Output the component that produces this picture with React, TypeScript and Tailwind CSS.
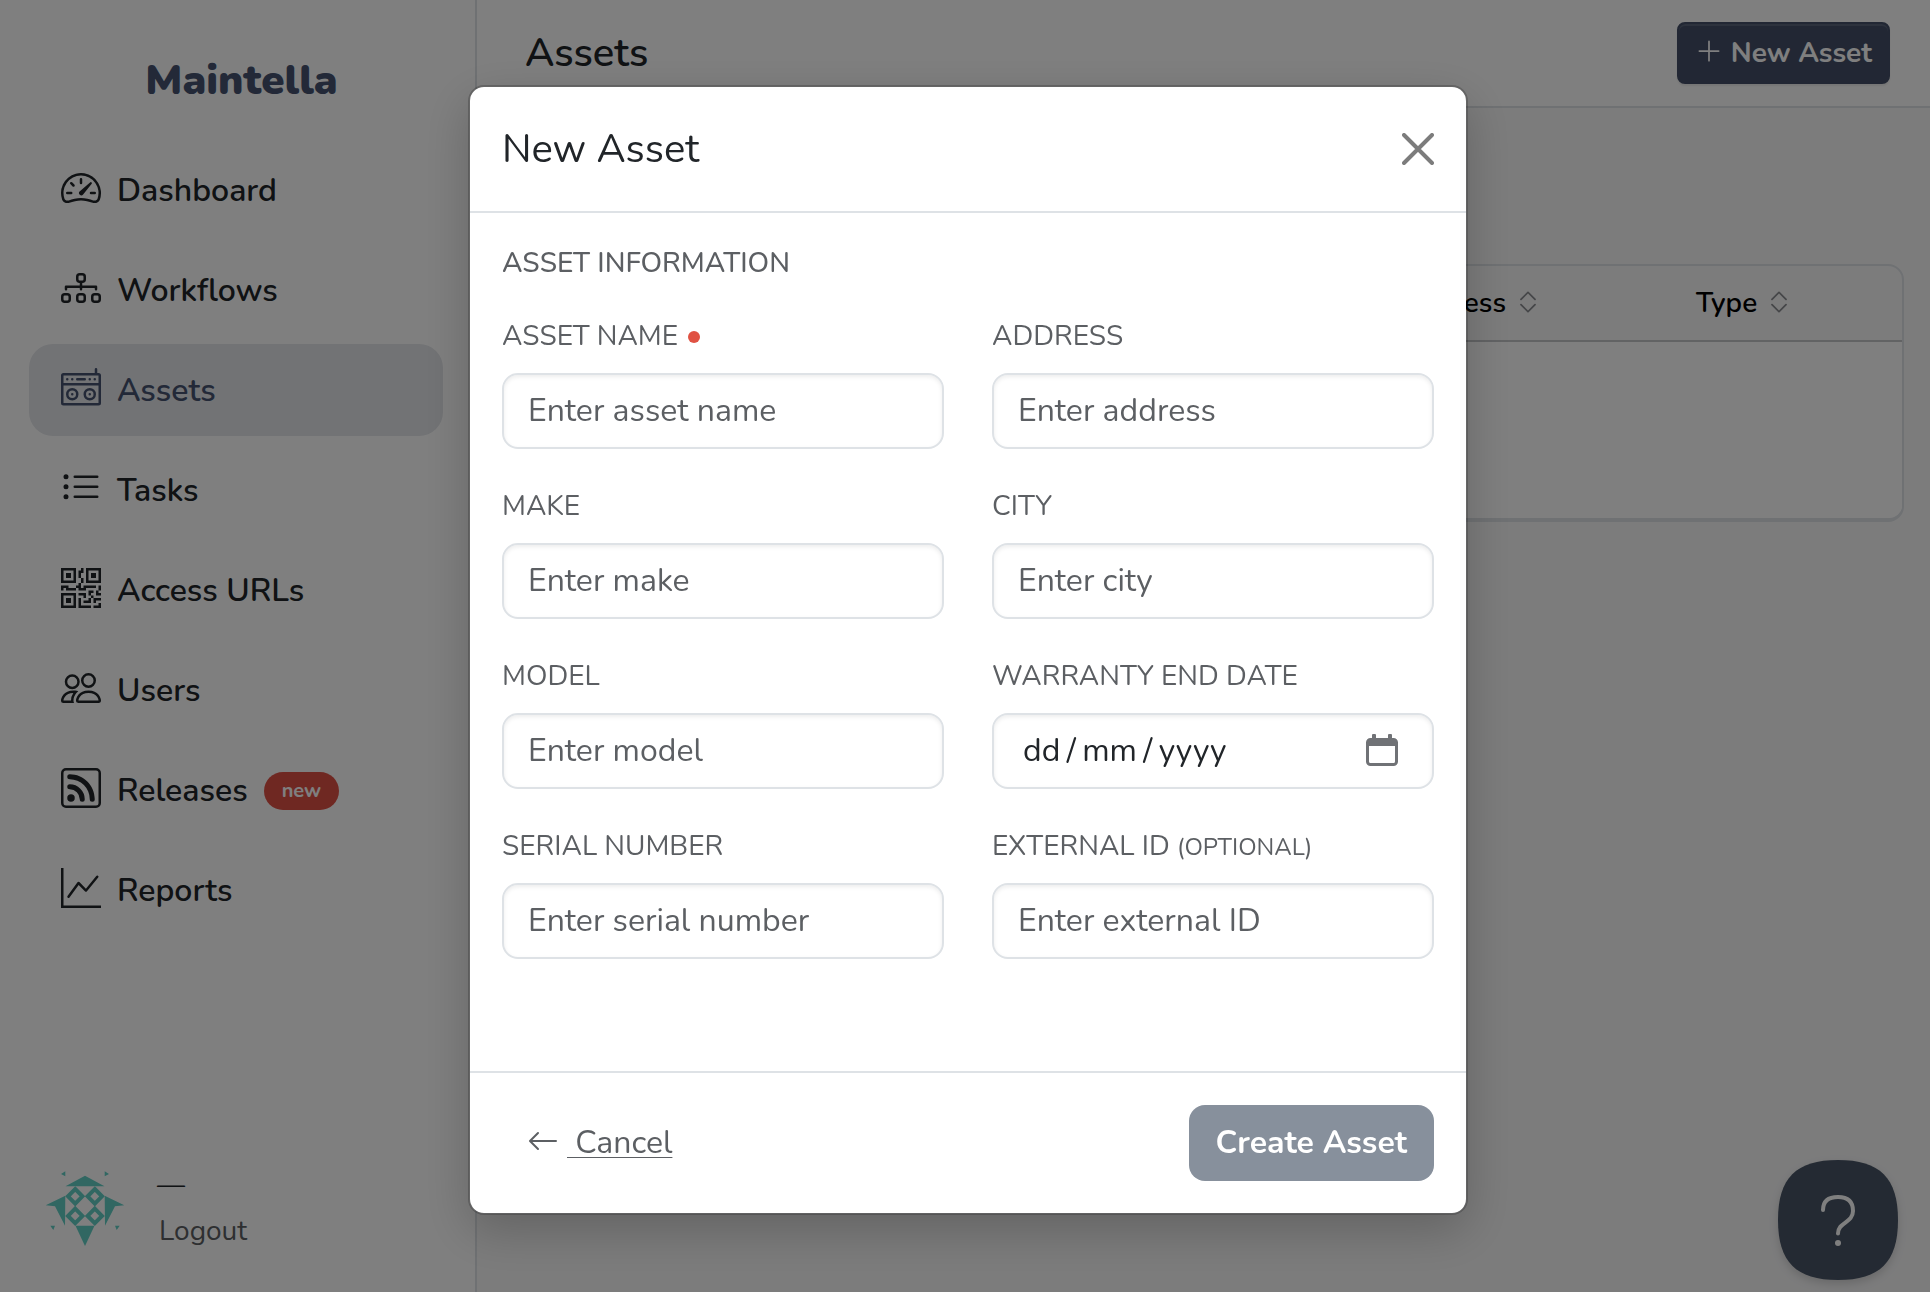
import { ReactNode, useState } from "react";
import {
  BsArrowLeft,
  BsBoombox,
  BsChevronExpand,
  BsDiagram3,
  BsGraphUp,
  BsListUl,
  BsPeople,
  BsPlusLg,
  BsQrCode,
  BsRss,
  BsSpeedometer2,
} from "react-icons/bs";

type NavItem = {
  label: string;
  icon: ReactNode;
  active?: boolean;
  badge?: string;
};

const navItems: NavItem[] = [
  { label: "Dashboard", icon: <BsSpeedometer2 /> },
  { label: "Workflows", icon: <BsDiagram3 /> },
  { label: "Assets", icon: <BsBoombox />, active: true },
  { label: "Tasks", icon: <BsListUl /> },
  { label: "Access URLs", icon: <BsQrCode /> },
  { label: "Users", icon: <BsPeople /> },
  { label: "Releases", icon: <BsRss />, badge: "new" },
  { label: "Reports", icon: <BsGraphUp /> },
];

type FieldProps = {
  id: string;
  label: string;
  placeholder: string;
  required?: boolean;
  optional?: boolean;
};

const fields: FieldProps[] = [
  { id: "name", label: "Asset name", placeholder: "Enter asset name", required: true },
  { id: "address", label: "Address", placeholder: "Enter address" },
  { id: "make", label: "Make", placeholder: "Enter make" },
  { id: "city", label: "City", placeholder: "Enter city" },
  { id: "model", label: "Model", placeholder: "Enter model" },
  // thin spaces round the slashes
  { id: "warranty", label: "Warranty end date", placeholder: "dd\u2009/\u2009mm\u2009/\u2009yyyy" },
  { id: "serial", label: "Serial number", placeholder: "Enter serial number" },
  { id: "external", label: "External ID", placeholder: "Enter external ID", optional: true },
];

function Avatar() {
  return (
    <svg viewBox="0 0 80 80" className="size-20" fill="#62cfc5" aria-hidden="true">
      <path d="M20.5 18.3 40 7.7l19.5 10.6z" />
      <path d="M30.5 57.7h19L40 78z" />
      <path d="M20.3 27.7.7 37.3l9.3 1 10 19.4z" />
      <path d="M59.7 27.7l19.6 9.6-9.3 1-10 19.4z" />
      <path d="M16 6l4.3-2.7v5zM64 6l-4.3-2.7v5zM5.3 57.7H10L8.3 62zM74.7 57.7H70l1.7 4.3z" />
      <g fill="none" stroke="#62cfc5" strokeWidth="4">
        <path d="M30.2 21l7.2 7.3-7.2 7.3-7.2-7.3z" />
        <path d="M49.8 21l7.2 7.3-7.2 7.3-7.2-7.3z" />
        <path d="M30.2 40.6l7.2 7.3-7.2 7.3-7.2-7.3z" />
        <path d="M49.8 40.6l7.2 7.3-7.2 7.3-7.2-7.3z" />
      </g>
    </svg>
  );
}

function Sidebar() {
  return (
    <aside className="flex w-[477px] shrink-0 flex-col border-r-2 border-[#dee2e6] bg-white">
      <div className="flex h-36 items-center justify-center pt-4 pl-2 text-[42px] font-black text-[#465370]">
        Maintella
      </div>
      <nav className="flex flex-col gap-2 pr-8 pl-[29px]">
        {navItems.map((item) => (
          <a
            key={item.label}
            href="#"
            className={`flex h-[92px] items-center gap-4 rounded-3xl px-8 pt-0.5 text-[32px] font-semibold ${
              item.active ? "bg-[#e4e6ea] text-[#465370]" : "text-[#212529]"
            }`}
          >
            <span className="pb-1.5 text-[40px]">{item.icon}</span>
            {item.label}
            {item.badge && (
              <span className="flex h-[38px] items-center rounded-full bg-[#df5045] px-[18px] text-xl font-bold text-white">
                {item.badge}
              </span>
            )}
          </a>
        ))}
      </nav>
      <div className="mt-auto flex items-center gap-8 pb-10 pl-[45px]">
        <Avatar />
        <div className="flex flex-col gap-1 text-[28px] leading-[42px]">
          <span className="text-[#212529]">—</span>
          <a href="#" className="pl-0.5 text-[#5c5f63]">
            Logout
          </a>
        </div>
      </div>
    </aside>
  );
}

function SortHeader({ label }: { label: string }) {
  return (
    <th className="h-[76px] border-b-2 border-[#c4c6c9] pl-6 text-left font-semibold text-black">
      <button className="flex items-center gap-2">
        {label}
        <BsChevronExpand className="mb-0.5 text-[28px] text-[#8a8c90]" />
      </button>
    </th>
  );
}

function AssetsPage() {
  return (
    <main className="flex min-w-0 flex-1 flex-col bg-[#f8f8f9]">
      <header className="flex h-[108px] items-center justify-between border-b-2 border-[#dee2e6] bg-white pr-10 pl-12">
        <h1 className="text-[40px] font-semibold text-[#212529]">Assets</h1>
        <button className="flex h-[62px] items-center gap-2 rounded-lg border-2 border-[#444f68] bg-[#444f68] px-4 text-[28px] font-bold text-white shadow-[inset_0_2px_0_rgba(255,255,255,0.12),0_2px_2px_rgba(0,0,0,0.08)]">
          <BsPlusLg className="mb-1" />
          New Asset
        </button>
      </header>
      <div className="px-[26px] pt-[156px]">
        <div className="overflow-hidden rounded-2xl border-2 border-b-4 border-[#dee2e6]">
          <table className="w-full table-fixed border-separate border-spacing-0 text-[28px]">
            <colgroup>
              <col />
              <col className="w-[296px]" />
              <col className="w-[230px]" />
            </colgroup>
            <thead>
              <tr>
                <th className="border-b-2 border-[#c4c6c9]"></th>
                <SortHeader label="Address" />
                <SortHeader label="Type" />
              </tr>
            </thead>
            <tbody>
              <tr>
                <td colSpan={3} className="h-[176px] bg-white"></td>
              </tr>
            </tbody>
          </table>
        </div>
      </div>
    </main>
  );
}

function CalendarIcon() {
  return (
    <svg viewBox="0 0 32 32" className="size-8" fill="#707276" aria-hidden="true">
      <path
        fillRule="evenodd"
        d="M6 1.5a1.8 1.8 0 0 1 4 0V4h12V1.5a1.8 1.8 0 0 1 4 0V4h1.5A4.5 4.5 0 0 1 32 8.5v19a4.5 4.5 0 0 1-4.5 4.5h-23A4.5 4.5 0 0 1 0 27.5v-19A4.5 4.5 0 0 1 4.5 4H6zM3 12v15.5A1.5 1.5 0 0 0 4.5 29h23a1.5 1.5 0 0 0 1.5-1.5V12z"
      />
    </svg>
  );
}

function Field({ id, label, placeholder, required, optional }: FieldProps) {
  const isDate = id === "warranty";

  return (
    <div className="flex flex-col gap-4">
      <label
        htmlFor={id}
        className="flex items-center gap-2.5 text-[28px] leading-[42px] text-[#5c5f63]"
      >
        <span className="uppercase">
          {label} {optional && <span className="text-2xl">(optional)</span>}
        </span>
        {required && <span className="mt-0.5 size-3 rounded-full bg-[#e05243]"></span>}
      </label>
      <div className="flex h-[76px] items-center rounded-2xl border-2 border-[#dee2e6] bg-white pb-0.5 shadow-[inset_0_2px_4px_rgba(0,0,0,0.075)]">
        <input
          id={id}
          type="text"
          placeholder={placeholder}
          className={`h-full w-full min-w-0 bg-transparent text-[32px] outline-none ${
            isDate
              ? "pl-[29px] placeholder:text-[#212529]"
              : "px-6 placeholder:text-[#5c5f63]"
          }`}
        />
        {isDate && (
          <button type="button" aria-label="Open calendar" className="pr-[34px]">
            <CalendarIcon />
          </button>
        )}
      </div>
    </div>
  );
}

function NewAssetModal({ onClose }: { onClose: () => void }) {
  return (
    <div className="fixed inset-0 flex items-start justify-center overflow-hidden bg-black/50 pt-[85px] pl-1.5">
      <form
        role="dialog"
        aria-labelledby="modal-title"
        className="w-full max-w-[1000px] rounded-2xl border-2 border-black/20 bg-white bg-clip-padding shadow-[0_16px_48px_rgba(0,0,0,0.2)]"
      >
        <div className="flex h-[126px] items-center justify-between border-b-2 border-[#dee2e6] px-8">
          <h2 id="modal-title" className="text-[40px] text-[#212529]">
            New Asset
          </h2>
          <button type="button" aria-label="Close" onClick={onClose}>
            <svg viewBox="0 0 32 32" className="size-8" stroke="#7c7c7c" strokeWidth="4" strokeLinecap="round">
              <path d="M2 2l28 28M30 2L2 30" />
            </svg>
          </button>
        </div>
        <div className="px-8 pt-[29px] pb-28">
          <h3 className="mb-[31px] text-[28px] leading-[42px] font-medium text-[#5c5f63] uppercase">
            Asset information
          </h3>
          <div className="grid grid-cols-2 gap-x-12 gap-y-9">
            {fields.map((field) => (
              <Field key={field.id} {...field} />
            ))}
          </div>
        </div>
        <div className="flex items-center justify-between border-t-2 border-[#dee2e6] p-8 text-[32px]">
          <button
            type="button"
            onClick={onClose}
            className="flex h-[76px] items-center gap-2 px-[25px] text-[#5c5f63]"
          >
            <BsArrowLeft className="mb-1" />
            <span className="whitespace-pre underline decoration-1 underline-offset-4"> Cancel</span>
          </button>
          <button
            type="button"
            className="h-[76px] rounded-2xl bg-[#87909c] px-[27px] font-bold text-white"
          >
            Create Asset
          </button>
        </div>
      </form>
    </div>
  );
}

export default function App() {
  const [open, setOpen] = useState(true);

  return (
    <div className="flex min-h-screen font-['Nunito','Lato',sans-serif]">
      <Sidebar />
      <AssetsPage />
      <button aria-label="Help" className="fixed right-8 bottom-3 size-[120px]">
        <svg viewBox="0 0 120 120" className="size-full drop-shadow-lg" fill="none">
          <path
            d="M60 0C102 0 120 18 120 60S102 120 60 120 0 102 0 60 18 0 60 0z"
            fill="#485466"
          />
          <path
            d="M45 50C45 41 50 37 60 37s15 5 15 14c0 12-15 11-15 22.5"
            stroke="#fff"
            strokeWidth="4"
            strokeLinecap="round"
          />
          <circle cx="60" cy="83" r="3" fill="#fff" />
        </svg>
      </button>
      {open && <NewAssetModal onClose={() => setOpen(false)} />}
    </div>
  );
}
